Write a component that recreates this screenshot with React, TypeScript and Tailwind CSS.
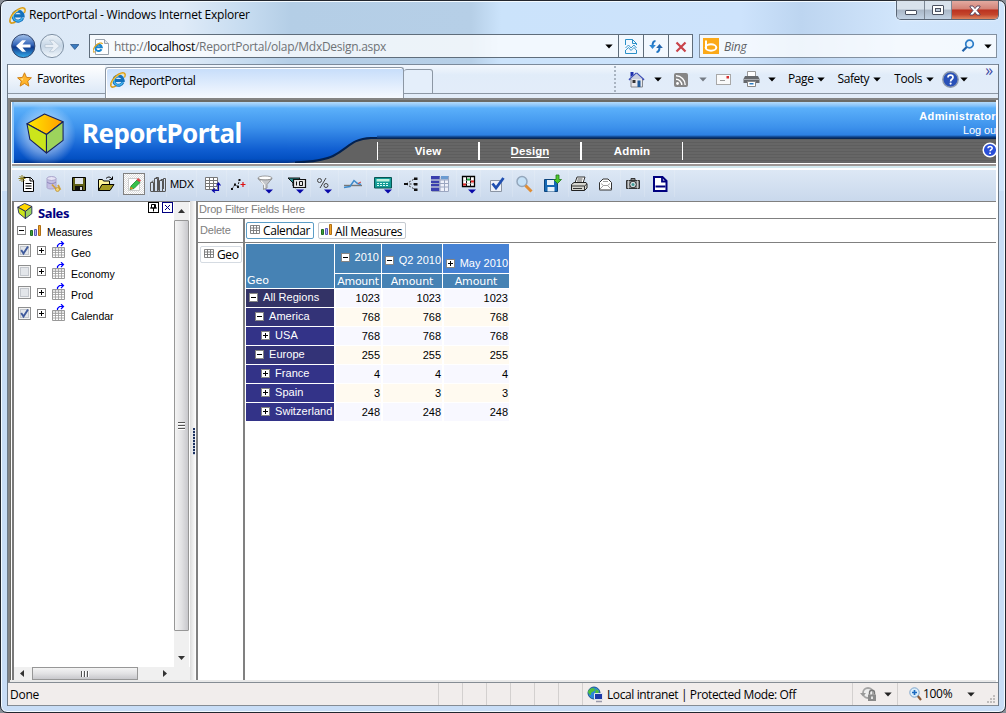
import type { ReactNode } from "react";

const ui = "font-['Open_Sans','Noto_Sans',sans-serif] text-[12px] whitespace-nowrap";
const arial = "font-['Liberation_Sans',Arial,sans-serif] whitespace-nowrap";

function Caret({ className = "text-black" }: { className?: string }) {
  return (
    <svg width="8" height="5" viewBox="0 0 8 5" className={"shrink-0 " + className}>
      <path d="M0.3 0.5h7.4L4 4.5z" fill="currentColor" />
    </svg>
  );
}

function IeLogo({ size = 16 }: { size?: number }) {
  return (
    <svg width={size} height={size} viewBox="0 0 16 16" className="shrink-0">
      <path d="M12.9 10.3A4.7 4.7 0 1 1 13.2 8.4H5.2" fill="none" stroke="#1371bd" strokeWidth="3" />
      <path d="M12.6 10.3A4.4 4.4 0 0 1 4.1 8.6 4.4 4.4 0 0 1 8.5 4.1" fill="none" stroke="#43b4ee" strokeWidth="1.3" />
      <path d="M14.3 5.5C16.5 1 13.6-.5 8.6 2.3 3.4 5.3.2 11 1 14c.7 2 3.5.9 5-.1" fill="none" stroke="#d99b16" strokeWidth="1.6" />
      <path d="M14 4.8C15.4 1.6 12.8.8 8.8 3 5 5.2 2.3 9 1.6 12" fill="none" stroke="#ffe06a" strokeWidth=".7" />
    </svg>
  );
}

function Cube({ size, plain }: { size: number; plain?: boolean }) {
  return (
    <svg width={size} height={size} viewBox="0 0 40 42" className="shrink-0">
      <defs>
        <linearGradient id="cubeTop" x1="0" x2="1">
          <stop offset="0" stopColor="#ffea00" />
          <stop offset="1" stopColor="#ff9c00" />
        </linearGradient>
      </defs>
      <g stroke="#17205c" strokeWidth={plain ? 2.2 : 1.1} strokeLinejoin="round">
        <path d="M1 11 19 1l19 8-17 13z" fill={plain ? "#ffd800" : "url(#cubeTop)"} />
        <path d="M1 11l20 11v19L4 27z" fill="#cbe51b" />
        <path d="M21 22 38 9v19L21 41z" fill="#9dd35c" />
      </g>
    </svg>
  );
}

function TitleBar() {
  return (
    <div className="flex h-[33px] shrink-0 items-start pl-[8px] pr-[6px]">
      <div className="flex grow items-center gap-[3px] pt-[5px]">
        <IeLogo size={17} />
        <span className={ui + " leading-[18px] tracking-[-0.25px] text-black"}>ReportPortal - Windows Internet Explorer</span>
      </div>
      <div className="flex h-[19px] overflow-hidden rounded-b-[5px] border border-t-0 border-[#5a6676] shadow-[0_0_2px_#fff]">
        <div className="flex w-[28px] items-center justify-center border-r border-[#7d8794] bg-linear-to-b from-[#d9e2ec] from-45% via-[#aab7c7] via-50% to-[#c2d2e4]">
          <div className="mt-[5px] h-[5px] w-[12px] rounded-[1px] border border-[#4b5160] bg-white" />
        </div>
        <div className="flex w-[27px] items-center justify-center border-r border-[#7d8794] bg-linear-to-b from-[#d9e2ec] from-45% via-[#aab7c7] via-50% to-[#c2d2e4]">
          <div className="flex h-[10px] w-[12px] items-center justify-center rounded-[1px] border border-[#4b5160] bg-white">
            <div className="h-[4px] w-[6px] border border-[#4b5160] bg-[#bcc9d8]" />
          </div>
        </div>
        <div className="flex w-[46px] items-center justify-center bg-[linear-gradient(#e3aaa0_0%,#d38377_44%,#bb3220_50%,#c4452c_75%,#dd8560_100%)]">
          <svg width="12" height="11" viewBox="0 0 12 11">
            <path d="M1 1h3l2 2.6L8 1h3v1L8 5.5 11 9v1H8L6 7.4 4 10H1V9l3-3.5L1 2z" fill="#fff" stroke="#53405a" strokeWidth=".9" />
          </svg>
        </div>
      </div>
    </div>
  );
}

function NavRow() {
  return (
    <div className="flex h-[30px] shrink-0 items-start pl-[10px] pr-[8px]">
      <svg width="68" height="27" viewBox="0 0 68 27" className="mt-[-1px] shrink-0">
        <defs>
          <linearGradient id="backFill" x1="0" y1="0" x2="0" y2="1">
            <stop offset="0" stopColor="#a7c5ec" />
            <stop offset=".45" stopColor="#3465b8" />
            <stop offset=".55" stopColor="#11398c" />
            <stop offset="1" stopColor="#35b0ee" />
          </linearGradient>
          <linearGradient id="fwdFill" x1="0" y1="0" x2="0" y2="1">
            <stop offset="0" stopColor="#eef4fa" />
            <stop offset=".5" stopColor="#c6d6e6" />
            <stop offset="1" stopColor="#f2f7fc" />
          </linearGradient>
        </defs>
        <circle cx="12.3" cy="13" r="11.6" fill="url(#backFill)" stroke="#33466c" strokeWidth="1" />
        <path d="M19.5 11.5h-8l3.5-4.2h-3.8L5 13l6.2 5.7H15l-3.5-4.2h8z" fill="#fff" />
        <circle cx="41" cy="13" r="11.6" fill="url(#fwdFill)" stroke="#7f91a5" strokeWidth="1" />
        <path d="M34 11.5h8l-3.5-4.2h3.8l6.2 5.7-6.2 5.7h-3.8l3.5-4.2h-8z" fill="#e9eff6" stroke="#b5c3d1" strokeWidth=".7" />
        <path d="M59.5 11.5h8.500l-4.200 5z" fill="#3b7cc0" stroke="#1f4c83" strokeWidth=".7" />
      </svg>
      <div className="ml-[10px] flex h-[24px] w-[604px] border border-[#5f6d7b] bg-white/75 pt-px">
        <div className="flex w-[528px] items-center pl-[3px] pr-[5px]">
          <svg width="17" height="18" viewBox="0 0 17 18" className="shrink-0">
            <path d="M2.5 1.5h9l4 4v11h-13z" fill="#fff" stroke="#9aa3ad" />
            <path d="M11.5 1.5v4h4" fill="#dfe6ee" stroke="#9aa3ad" />
            <path d="M8.500 11.3A3.2 3.2 0 1 1 8.800 9.3H3" fill="none" stroke="#1a86cf" strokeWidth="2" />
            <path d="M9.500 6C9 4 5 5 2 8.500 -.5 12 -1 15 2 13.700" fill="none" stroke="#e2a51d" strokeWidth="1.2" />
          </svg>
          <span className={ui + " ml-[4px] grow tracking-[-0.28px] text-[#6e7276]"}>
            http://<span className="text-black">localhost</span>/ReportPortal/olap/MdxDesign.aspx
          </span>
          <Caret />
        </div>
        <div className="-mt-px flex w-[25px] items-center justify-center border-l border-[#5f6d7b]">
          <svg width="12" height="15" viewBox="0 0 12 15" fill="none" stroke="#2a90c8">
            <path d="M.5 6V.5h7l4 4V6M7.500 .5v4h4M.5 11v3.500h11V11" />
            <path d="M.5 9 3.500 6 6 9l3-3 2.500 3M.5 11.500 3.500 8.500 6 11.500l3-3 2.500 3" strokeWidth=".9" />
          </svg>
        </div>
        <div className="-mt-px flex w-[25px] items-center justify-center border-l border-[#5f6d7b]">
          <svg width="14" height="13" viewBox="0 0 14 13" fill="none" stroke="#1e74c4" strokeWidth="2">
            <path d="M6.500 1C4 1 3.500 2.500 3.500 6" />
            <path d="M.2 5h6.600L3.500 9z" fill="#2a86d4" stroke="none" />
            <path d="M7.500 12c2.500 0 3-1.500 3-5" />
            <path d="M7.200 8h6.600L10.500 4z" fill="#2465ad" stroke="none" />
          </svg>
        </div>
        <div className="-mt-px flex w-[24px] items-center justify-center border-l border-[#5f6d7b]">
          <svg width="12" height="12" viewBox="0 0 12 12" className="mt-px">
            <path d="M1.500 1.500 10.500 10.500M10.500 1.500 1.500 10.500" stroke="#c9434a" strokeWidth="2.200" />
          </svg>
        </div>
      </div>
      <div className="ml-[6px] flex h-[24px] grow items-center border border-[#8290a0] bg-white/75 pl-[3px] pr-[4px]">
        <svg width="16" height="16" viewBox="0 0 16 16" className="shrink-0">
          <rect width="16" height="16" fill="#fba919" />
          <path d="M3 2.500v8" stroke="#fff" strokeWidth="2" />
          <ellipse cx="8" cy="9.500" rx="5.300" ry="3.200" fill="none" stroke="#fff" strokeWidth="2" />
        </svg>
        <span className={ui + " ml-[5px] mt-[2px] grow italic tracking-[-0.2px] text-[#5e6266]"}>Bing</span>
        <svg width="14" height="14" viewBox="0 0 14 14" className="mr-[9px]">
          <circle cx="8.500" cy="5" r="3.800" fill="#e8f4fd" stroke="#2b7cc8" strokeWidth="1.700" />
          <path d="M5.700 8 1.500 12.300" stroke="#2161a8" strokeWidth="2.200" />
        </svg>
        <Caret />
      </div>
    </div>
  );
}

function CommandBar() {
  return (
    <div className="flex h-[34px] shrink-0 border-t border-[#7b8a9b] bg-linear-to-b from-[#f2f7fd] from-0% via-[#e1ecf9] via-30% to-[#e3edf9]">
      <div className="flex h-[29px] w-[97px] items-center border-b border-[#8c97a4] bg-linear-to-b from-white to-[#dde9f7] pl-[9px]">
        <svg width="15" height="15" viewBox="0 0 15 15">
          <path d="m7.500.8 2 4.600 4.900.4-3.700 3.300 1.100 5-4.300-2.700-4.300 2.700 1.100-5L.6 5.800l4.900-.4z" fill="#ffb52c" stroke="#d18215" strokeWidth="1" />
          <path d="m7.500 3-.9 3.300-3 .4 2 2" fill="#ffe387" />
        </svg>
        <span className={ui + " ml-[5px] tracking-[-0.35px] text-black"}>Favorites</span>
      </div>
      <div className="mt-[2px] flex h-[32px] w-[299px] items-start rounded-t-[3px] border border-b-0 border-[#8c97a4] bg-linear-to-b from-[#c6ddfa] to-[#f7faff] pl-[4px] pt-[4px] shadow-[inset_1px_1px_0_#fff]">
        <IeLogo size={16} />
        <span className={ui + " ml-[3px] leading-[17px] tracking-[-0.4px] text-black"}>ReportPortal</span>
      </div>
      <div className="mt-[4px] h-[25px] w-[29px] rounded-t-[3px] border border-l-0 border-[#8c97a4] bg-[#e4eefa]" />
      <div className="flex h-[29px] grow items-center border-b border-[#8c97a4]">
        <div className="ml-[181px] h-[26px] w-0 border-l-2 border-dotted border-[#a9b4c1]" />
        <svg width="17" height="17" viewBox="0 0 17 17" className="ml-[12px]">
          <path d="M3 7.500h11.500V16H3z" fill="#e8e8ec" stroke="#84888e" />
          <path d="M8.500 2 1 8.800M8.500 2l7.500 6.800" stroke="#3d4db6" strokeWidth="1.600" />
          <path d="M8.500 2.500 2.500 8h12z" fill="#c9cede" />
          <path d="M2.500 1h3v3l-3 2z" fill="#1f2fae" />
          <path d="M9.500 9.500h3V16h-3z" fill="#1f5b9a" />
          <path d="M4.500 9h3v3h-3z" fill="#333" />
        </svg>
        <span className="ml-[9px]"><Caret /></span>
        <svg width="14" height="14" viewBox="0 0 14 14" className="ml-[12px] mt-px">
          <rect width="14" height="14" rx="2" fill="#868686" />
          <circle cx="3.500" cy="10.500" r="1.400" fill="#fff" />
          <path d="M2 6.200a5.800 5.800 0 0 1 5.800 5.800M2 2.800A9.200 9.200 0 0 1 11.200 12" fill="none" stroke="#fff" strokeWidth="1.400" />
        </svg>
        <span className="ml-[11px]"><Caret className="text-[#747b84]" /></span>
        <svg width="15" height="11" viewBox="0 0 15 11" className="ml-[9px]">
          <rect x=".5" y=".5" width="14" height="10" fill="#fafafa" stroke="#a8a8a8" />
          <path d="M10.500 2h2.500v2.500h-2.500z" fill="#d82d2d" />
          <path d="M4 6.500h5" stroke="#999" />
        </svg>
        <svg width="17" height="16" viewBox="0 0 17 16" className="ml-[12px]">
          <path d="M4.500.5h8v5h-8z" fill="#fff" stroke="#999" />
          <path d="M2 5h13l1.500 3v4h-16V8z" fill="#66696d" />
          <path d="M1 8.500h15" stroke="#a8abb0" />
          <path d="M4.500 10.500h8v5h-8z" fill="#fff" stroke="#888" />
          <path d="M6.500 12h4v1.500h-4z" fill="#2c7cc4" />
        </svg>
        <span className="ml-[8px]"><Caret /></span>
        <span className={ui + " ml-[12px] tracking-[-0.4px]"}>Page</span>
        <span className="ml-[3px]"><Caret /></span>
        <span className={ui + " ml-[13px] tracking-[-0.45px]"}>Safety</span>
        <span className="ml-[4px]"><Caret /></span>
        <span className={ui + " ml-[13px] tracking-[-0.35px]"}>Tools</span>
        <span className="ml-[4px]"><Caret /></span>
        <svg width="17" height="17" viewBox="0 0 17 17" className="ml-[8px]">
          <circle cx="8.500" cy="8.500" r="7.700" fill="#2850b8" stroke="#8d99ad" strokeWidth="1.400" />
          <path d="M6 6.500C6 3.400 11 3.500 11 6.400c0 2-2.400 1.800-2.400 4" fill="none" stroke="#fff" strokeWidth="1.700" />
          <circle cx="8.600" cy="12.600" r="1.100" fill="#fff" />
        </svg>
        <span className="ml-[1px]"><Caret /></span>
        <span className={ui + " ml-[17px] mt-[-17px] text-[16px] leading-[15px] text-[#3e4aa5]"}>»</span>
      </div>
    </div>
  );
}

function HeaderTab({ label, on }: { label: string; on?: boolean }) {
  return (
    <div className={arial + " flex h-[18px] w-[102px] items-center justify-center border-r-2 border-white text-[11.500px] font-bold tracking-[0.1px] text-white last-of-type:w-[101px] last-of-type:border-r"}>
      <span className={on ? "border-b border-white leading-[12px]" : "leading-[13px]"}>{label}</span>
    </div>
  );
}

function Banner() {
  return (
    <div className="flex h-[61px] shrink-0 overflow-hidden">
      <div className="flex w-[275px] shrink-0 items-center border-l-2 border-[#8cc4f6] bg-[linear-gradient(#b5dcfb_0px,#83c2fa_4px,#5bb0fa_6px,#3d92ec_25px,#0f5dd0_48px,#0350c2_57px,#03358a_61px)]">
        <div className="flex h-full w-[62px] items-center justify-center bg-[radial-gradient(circle_at_50%_54%,#ffffffa0_0%,#ffffff60_40%,transparent_68%)] pt-px">
          <Cube size={41} />
        </div>
        <span className="ml-[6px] mt-px font-['Noto_Sans',sans-serif] text-[26px] leading-[34px] font-bold tracking-[-0.6px] text-white">ReportPortal</span>
      </div>
      <svg width="90" height="61" viewBox="0 0 90 61" className="shrink-0">
        <defs>
          <linearGradient id="bannerFill" x1="0" y1="0" x2="0" y2="61" gradientUnits="userSpaceOnUse">
            <stop offset="0" stopColor="#b5dcfb" />
            <stop offset=".066" stopColor="#83c2fa" />
            <stop offset=".1" stopColor="#5bb0fa" />
            <stop offset=".41" stopColor="#3d92ec" />
            <stop offset=".79" stopColor="#0f5dd0" />
            <stop offset=".934" stopColor="#0350c2" />
            <stop offset="1" stopColor="#03358a" />
          </linearGradient>
        </defs>
        <rect width="90" height="61" fill="#626262" />
        <path d="M0 0h90v36h-6C64 37 62 46 46 54 36 59 20 60 0 61z" fill="url(#bannerFill)" />
        <path d="M90 36h-6C64 37 62 46 46 54 36 59 20 60 8 60.500" fill="none" stroke="#03214f" strokeWidth="2" />
      </svg>
      <div className="flex min-w-0 grow flex-col">
        <div className="flex h-[37px] shrink-0 flex-col items-end bg-[linear-gradient(#b5dcfb_0px,#83c2fa_4px,#5bb0fa_6px,#3d92ec_25px,#2d80e2_33px,#0c3f86_35px,#061f45_37px)] pt-[7px] text-white">
          <span className={arial + " text-[11px] leading-[14px] font-bold tracking-[0.35px]"}>Administrator</span>
          <span className={arial + " text-[11px] leading-[14px] tracking-[-0.1px]"}>Log ou</span>
        </div>
        <div className="flex grow items-center bg-[repeating-linear-gradient(#5e5e5e_0px,#5e5e5e_1px,#666_1px,#666_3px)]">
          <div className="h-[18px] w-px bg-white" />
          <HeaderTab label="View" />
          <HeaderTab label="Design" on />
          <HeaderTab label="Admin" />
          <span className="flex grow justify-end overflow-hidden">
            <svg width="14" height="16" viewBox="0 0 14 16" className="my-[2px] mb-[5px]">
              <circle cx="8" cy="8" r="6.800" fill="#2a4fd8" stroke="#fff" strokeWidth="1.500" />
              <path d="M6 6.200c0-2.500 4.200-2.300 4.200 0 0 1.500-2.100 1.500-2.100 3" fill="none" stroke="#fff" strokeWidth="1.500" />
              <path d="M7.200 10.500h1.700v1.600H7.200z" fill="#fff" />
            </svg>
          </span>
        </div>
      </div>
    </div>
  );
}

function Ico({ children }: { children: ReactNode }) {
  return (
    <svg width="20" height="20" viewBox="0 0 20 20" fill="none" className="shrink-0">
      {children}
    </svg>
  );
}

const drop = <path d="M9 15.500h8l-4 4z" fill="#0808a8" />;

const tools: { w: string; el: ReactNode; on?: boolean }[] = [
  { w: "w-[28px]", el: <Ico><path d="M6.500 3.500h7l3 3v11h-10z" fill="#fff" stroke="#000" /><path d="M13 3.500v3.500h3.500M8.500 9.500h6M8.500 12h6M8.500 14.500h6" stroke="#000" /><path d="M5 1v7M1.500 4.500h7M2.500 2l5 5M7.500 2l-5 5" stroke="#8a7c19" /></Ico> },
  { w: "w-[24px]", el: <Ico><path d="M4 4.500v9c0 2 9 2 9 0v-9" fill="#c3bde3" stroke="#a9a4cb" /><ellipse cx="8.500" cy="4.500" rx="4.500" ry="2" fill="#e6e3f5" stroke="#a9a4cb" /><path d="M4 8c2 2 7 2 9 0" stroke="#8c86bb" /><path d="M9 10.500 14 16l3-1-2-4" stroke="#d0a13c" strokeWidth="1.800" /><circle cx="14.500" cy="15.500" r="2" fill="#f2d476" stroke="#b78b2c" strokeWidth=".7" /></Ico> },
  { w: "w-[28px]", el: <Ico><path d="M3.500 3.500h13v13h-13z" fill="#5f5f16" stroke="#000" /><path d="M6 4h8v6H6z" fill="#dfe3ea" /><path d="M6 12h8v4.500H6z" fill="#111" /><path d="M11 13h2v3h-2z" fill="#ddd" /></Ico> },
  { w: "w-[26px]", el: <Ico><path d="M2.500 16.500v-11h4l1 1.500h6v3" fill="#fff59a" stroke="#000" /><path d="M2.500 16.500 6 10.500h12l-4 6z" fill="#a59b22" stroke="#000" /><path d="M10 4.500c2-2 4-2 6 .5M16.500 2.500V5.500h-3" stroke="#000" /></Ico> },
  { w: "w-[30px]", on: true, el: <Ico><path d="M4.500 4.500h11v12h-11z" fill="#fff" stroke="#ccc" /><path d="m6 15.500 1-3.500 6-6 3 2.500-6 6z" fill="#37c14a" stroke="#218433" strokeWidth=".8" /><path d="m12.500 6 1.500-2 3 2.500-1.500 1.500z" fill="#e04747" /><path d="m6 15.500.8-2.800L9.500 14.500z" fill="#e88b1e" /></Ico> },
  { w: "w-[18px]", el: <Ico><path d="M2.500 17V8.500h3V17M6.500 17V4.500h3V17M11.500 17V6.500h3V17M15.500 15V4.500h2V17M2.500 17.500h15M3.500 8.500l1-1.500h1M7.500 4.500l.5-1h2.500v13M12.500 6.500l.5-1h2.500" stroke="#555" /></Ico> },
  { w: "w-[30px]", el: <span className={arial + " pl-px pt-px text-[11px] tracking-[-0.1px] text-black"}>MDX</span> },
  { w: "w-[30px]", el: <Ico><path d="M3.500 3.500h12v12h-12z" fill="#fff" stroke="#777" /><path d="M3.500 6.500h12M3.500 9.500h12M3.500 12.500h12M7.500 3.500v12M11.500 3.500v12" stroke="#777" /><path d="M11 16.500h5.500V9.500M14.500 11.500l2-2.500 2 2.500M13 14.500l-2.500 2 2.500 2" stroke="#0a0aa8" strokeWidth="1.200" /></Ico> },
  { w: "w-[22px]", el: <Ico><path d="m4 15 3-4.500 2.500 2.500 2-7" stroke="#222" strokeDasharray="2 1" /><path d="M3 14h2v2H3zM6 9.500h2v2H6zM9 12h2v2H9zM10.500 5h2v2h-2z" fill="#111" /><path d="M12.500 10.500h5M15 8v5" stroke="#d11" strokeWidth="1.200" /></Ico> },
  { w: "w-[34px]", el: <Ico><ellipse cx="9" cy="4" rx="7" ry="2" fill="#fff" stroke="#888" strokeWidth=".8" /><path d="m2 4.500 5.500 6v5l3.500-1.500v-3.500l5-6c-2 2-11 2-14 0z" fill="#c4c6ca" stroke="#888" strokeWidth=".8" /><path d="M5 6.800 8.500 11v3" stroke="#f5f5f5" strokeWidth="1.200" />{drop}</Ico> },
  { w: "w-[28px]", el: <Ico><path d="M1 4h12L9 9v5l-3-2V9z" fill="#269090" stroke="#111" /><path d="M6.500 5.500h12v8h-12z" fill="#e8e8e8" stroke="#111" strokeWidth="1.200" /><path d="M9.500 7.500v4M12.500 7.500h3v4h-3z" stroke="#111" />{drop}</Ico> },
  { w: "w-[28px]", el: <Ico><circle cx="4.500" cy="6.500" r="2" stroke="#444" /><circle cx="11" cy="11.500" r="2" stroke="#444" /><path d="M11 4 5 14" stroke="#444" />{drop}</Ico> },
  { w: "w-[28px]", el: <Ico><path d="M1 11.500h18" stroke="#777" strokeWidth="1.400" /><path d="m1 13.500 6-1 4-6 3.500 3 3.500 1" stroke="#3d8acb" strokeWidth="1.500" /><path d="m15 9.500 3-1.500" stroke="#cf3a3a" /></Ico> },
  { w: "w-[32px]", el: <Ico><path d="M1.500 3.500h17v10.500h-17z" fill="#129b96" stroke="#085553" /><path d="M3.500 5h13v2.500h-13z" fill="#bff0dc" /><path d="M4 9.500h12M4 11.500h12" stroke="#d8fff6" strokeDasharray="2 1" /><path d="M11 15.500h8l-4 4z" fill="#0808a8" /></Ico> },
  { w: "w-[24px]", el: <Ico><path d="M5 10 14 4.500M5 10h9M5 10l9 5.500" stroke="#333" strokeDasharray="2 1.500" /><path d="M3 9h4v2H3zM13 3.500h3.500V6H13zM13 9h3.500v2.500H13zM13 14.500h3.500V17H13z" fill="#111" /></Ico> },
  { w: "w-[34px]", el: <Ico><path d="M1 2h18v16H1z" fill="#eef0fa" /><path d="M1 2h9v3.500H1zM1 6.500h8.500V9H1zM1 10h8.500v2.500H1zM1 13.500h8.500V17H1z" fill="#3a3fae" /><path d="M11 2h8v3.500h-8z" fill="#6a9bd1" /><path d="M1.500 6h17M1.500 9.500h17M1.500 13h17M10 2.500v15M14.500 6v11.500M18.500 2.500v15M1.500 17.500h17" stroke="#9ba6c0" /></Ico> },
  { w: "w-[24px]", el: <Ico><path d="M3.500 2.500h12v10h-12z" fill="#fff" stroke="#000" strokeWidth="1.300" /><path d="M7.500 2.500v10M11.500 2.500v10" stroke="#111" /><path d="M4 6.500h11M4 9.500h11" stroke="#bbb" strokeWidth=".6" /><path d="M4 9.500h3v2H4zM12 6.500h3v2h-3z" fill="#d22" /><path d="M8 4.500h3v2H8z" fill="#2a4" /><path d="M9 15.500h8l-4 4z" fill="#0808a8" /></Ico> },
  { w: "w-[32px]", el: <Ico><path d="M3.500 6.500h11v11h-11z" fill="#eef2f8" stroke="#8a94a3" /><path d="M5.500 9.500 9 14 16.500 4" stroke="#1f4fb0" strokeWidth="2.800" /></Ico> },
  { w: "w-[22px]", el: <Ico><circle cx="8" cy="7.500" r="5" fill="#c5e1f7" stroke="#93a6bb" strokeWidth="1.500" /><path d="m11.500 11.500 6 6" stroke="#df8d35" strokeWidth="3" /></Ico> },
  { w: "w-[34px]", el: <Ico><path d="M2.500 5.500h13v12h-13z" fill="#1669b4" stroke="#0d447c" /><path d="M5 6h7v5H5zM5.500 13h7v4.500h-7z" fill="#e8f2fa" /><path d="M14 1h3v4.500h2.500l-4 4-4-4H14z" fill="#4fc92c" stroke="#1f7a16" strokeWidth=".8" /></Ico> },
  { w: "w-[20px]", el: <Ico><path d="m6 9 2-6h8l-2 6" fill="#fff" stroke="#333" /><path d="M8.500 5h5M8 7h5" stroke="#555" /><path d="M2.500 10.500 5 8.500h12l1 1.500v4l-2.500 2.500h-13z" fill="#d6d6d0" stroke="#222" /><path d="M2.500 12h13v4.500M15.500 12 18 10M4 14.500h9" stroke="#333" /></Ico> },
  { w: "w-[32px]", el: <Ico><path d="M4.500 8.500 8 5h5l3.500 3.500v7.500h-12z" fill="#fff" stroke="#333" /><path d="m4.500 15.500 4-4h4l4 4M6 9.500l2.500 2M15 9.500l-2.500 2M8 7.500h5" stroke="#888" strokeWidth=".8" /></Ico> },
  { w: "w-[24px]", el: <Ico><path d="M3.500 6.500h13v8h-13z" fill="#8a8d8f" stroke="#333" /><path d="M8 4.500h4v2H8z" fill="#888" stroke="#333" /><circle cx="10" cy="10.500" r="3.300" fill="#d6dfe0" stroke="#333" /><circle cx="10" cy="10.500" r="1.500" fill="#439d98" /><path d="M5.500 6.500v8M14.500 6.500v8" stroke="#ccc" /></Ico> },
  { w: "w-[30px]", el: <Ico><path d="M4 3h8.500l4 4v10H4z" fill="#fff" stroke="#00007e" strokeWidth="2" /><path d="M12 3v4.500h4.500M5.500 12.500h10" stroke="#00007e" strokeWidth="1.800" /></Ico> },
];

function Toolbar() {
  return (
    <div className="flex h-[31px] shrink-0 items-start bg-linear-to-b from-[#dde8f5] to-[#c9d8ec] pl-px">
      {tools.map((t, i) => (
        <div key={i} className={"flex h-[27px] shrink-0 items-center justify-center border-r border-white/15 " + t.w}>
          {t.on ? (
            <div className="flex h-[22px] w-[22px] items-center justify-center border border-[#808080] bg-[repeating-conic-gradient(#ddd_0_25%,#fff_0_50%)] bg-size-[2px_2px]">{t.el}</div>
          ) : (
            t.el
          )}
        </div>
      ))}
    </div>
  );
}

function Toggle({ open }: { open?: boolean }) {
  return (
    <svg width="9" height="9" viewBox="0 0 9 9" className="shrink-0">
      <rect x=".5" y=".5" width="8" height="8" fill="#fff" stroke="#848484" />
      <path d={open ? "M2 4.500h5" : "M2 4.500h5M4.500 2v5"} stroke="#000" />
    </svg>
  );
}

function GridIcon() {
  return (
    <svg width="14" height="17" viewBox="0 -6 14 17" className="shrink-0">
      <path d="M.5.500h12v10H.5z" fill="#fff" stroke="#999" />
      <path d="M1 1.500h11v1H1z" fill="#c4c4c4" />
      <path d="M.5 3.500h12M.5 5.500h12M.5 8h12M3.500.500v10M6.500.500v10M9.500.500v10" stroke="#999" strokeWidth=".8" />
      <path d="M5.500 0V-1.500L7.500-3.500h3.500M9-5.800l2.500 2.300L9-1" fill="none" stroke="#00f" strokeWidth="1.200" />
    </svg>
  );
}

function Bars() {
  return (
    <svg width="13" height="11" viewBox="0 0 13 11" className="shrink-0">
      <path d="M.5 5.500h2v5h-2z" fill="#3ea23e" stroke="#236b23" />
      <path d="M4.500 4.500h2v6h-2z" fill="#b0b0f0" stroke="#5a5ab8" />
      <path d="M8.500.500h2v10h-2z" fill="#f3a227" stroke="#b06f14" />
    </svg>
  );
}

function Check({ on }: { on?: boolean }) {
  return (
    <svg width="13" height="13" viewBox="0 0 13 13" className="shrink-0">
      <rect x=".5" y=".5" width="12" height="12" fill="#f4f4f4" stroke="#8e8f8f" />
      <rect x="2.500" y="2.500" width="8" height="8" fill="#e3e6ea" stroke="#c3c7cd" />
      {on && <path d="m3.200 6 2.300 3.500 4.500-7" fill="none" stroke="#3f5a9c" strokeWidth="1.900" />}
    </svg>
  );
}

const dims = [
  { name: "Geo", on: true },
  { name: "Economy", on: false },
  { name: "Prod", on: false },
  { name: "Calendar", on: true },
];

function Sidebar() {
  return (
    <div className="flex w-[178px] shrink-0 flex-col border-l-2 border-t border-[#7a7a7a] bg-white">
      <div className="flex min-h-0 grow">
        <div className="flex w-[160px] shrink-0 flex-col">
          <div className="flex h-[21px] items-start pl-[3px]">
            <span className="mt-[1px]"><Cube size={16} plain /></span>
            <span className="ml-[5px] mt-[3px] font-['Noto_Sans',sans-serif] text-[13px] leading-[16px] font-bold tracking-[-0.4px] text-[#000080]">Sales</span>
            <svg width="11" height="11" viewBox="0 0 11 11" className="ml-auto">
              <rect x=".5" y=".5" width="10" height="10" fill="#fff" stroke="#000" />
              <path d="M3.500 2.500h4v3.500h-4zM2 6h7M5.500 6v3.500M6.500 3v3" fill="none" stroke="#000" />
            </svg>
            <svg width="11" height="11" viewBox="0 0 11 11" className="ml-[3px] mr-[1px]">
              <rect x=".5" y=".5" width="10" height="10" fill="#fff" stroke="#000080" />
              <path d="m3 3 5 5M8 3 3 8" stroke="#000080" />
            </svg>
          </div>
          <div className="flex h-[19px] items-center pl-[3px]">
            <span className="mt-[-4px]"><Toggle open /></span>
            <span className="ml-[4px] mt-[-4px]"><Bars /></span>
            <span className={arial + " ml-[4px] text-[10.500px] tracking-[-0.1px] text-black"}>Measures</span>
          </div>
          {dims.map((d) => (
            <div key={d.name} className="flex h-[21px] items-start pl-[4px]">
              <span className="mt-[2px]"><Check on={d.on} /></span>
              <span className="ml-[6px] mt-[4px]"><Toggle /></span>
              <span className="ml-[6px] mt-[-1px]"><GridIcon /></span>
              <span className={arial + " ml-[5px] mt-[4px] text-[10.500px] leading-[14px] text-black"}>{d.name}</span>
            </div>
          ))}
        </div>
        <div className="flex w-[15px] shrink-0 flex-col items-center bg-[#f0f0f0]">
          <svg width="7" height="4" viewBox="0 0 7 4" className="mt-[7px]"><path d="M0 4h7L3.500 0z" fill="#333" /></svg>
          <div className="mt-[7px] flex h-[411px] w-full shrink-0 flex-col items-center justify-center gap-px rounded-[1px] border border-[#979797] bg-linear-to-r from-[#f4f4f4] via-[#e2e2e4] to-[#c8c8cc]">
            <div className="h-[2px] w-[7px] border-b border-white bg-[#555]" />
            <div className="h-[2px] w-[7px] border-b border-white bg-[#555]" />
            <div className="h-[2px] w-[7px] border-b border-white bg-[#555]" />
          </div>
          <svg width="7" height="4" viewBox="0 0 7 4" className="mt-[25px]"><path d="M0 0h7L3.500 4z" fill="#333" /></svg>
        </div>
      </div>
      <div className="flex h-[13px] shrink-0 items-center bg-[#f0f0f0]">
        <svg width="4" height="7" viewBox="0 0 4 7" className="ml-[6px]"><path d="M4 0v7L0 3.500z" fill="#333" /></svg>
        <div className="ml-[8px] flex h-[13px] w-[106px] items-center justify-center gap-px border border-[#979797] bg-linear-to-b from-[#f4f4f4] via-[#e2e2e4] to-[#c8c8cc]">
          <div className="h-[6px] w-[2px] border-r border-white bg-[#555]" />
          <div className="h-[6px] w-[2px] border-r border-white bg-[#555]" />
          <div className="h-[6px] w-[2px] border-r border-white bg-[#555]" />
        </div>
        <svg width="4" height="7" viewBox="0 0 4 7" className="ml-[25px]"><path d="M0 0v7l4-3.500z" fill="#333" /></svg>
      </div>
    </div>
  );
}

const rows = [
  { name: "All Regions", pad: "pl-[3px]", open: true, v: 1023, bg: "bg-[#333366]" },
  { name: "America", pad: "pl-[9px]", open: true, v: 768, bg: "bg-[#333377]" },
  { name: "USA", pad: "pl-[15px]", open: false, v: 768, bg: "bg-[#333388]" },
  { name: "Europe", pad: "pl-[9px]", open: true, v: 255, bg: "bg-[#333377]" },
  { name: "France", pad: "pl-[15px]", open: false, v: 4, bg: "bg-[#333388]" },
  { name: "Spain", pad: "pl-[15px]", open: false, v: 3, bg: "bg-[#333388]" },
  { name: "Switzerland", pad: "pl-[15px]", open: false, v: 248, bg: "bg-[#333388]" },
];

const verdana = "font-['DejaVu_Sans',Verdana,sans-serif] text-[11px] whitespace-nowrap text-white";

function ColHead({ label, open, cls }: { label: string; open?: boolean; cls: string }) {
  return (
    <div className={"flex items-start justify-end " + cls}>
      <span className="mt-[2px] mr-[5px]"><Toggle open={open} /></span>
      <span className={arial + " text-[11px] leading-[12px] text-white"}>{label}</span>
    </div>
  );
}

function Pivot() {
  return (
    <div className="grid w-[263px] grid-cols-[88px_46px_60px_66px] grid-rows-[29px_14px] gap-px">
      <div className={verdana + " row-span-2 flex items-end bg-[#4682b4] pl-px leading-[14px]"}>Geo</div>
      <ColHead label="2010" open cls="bg-[#4682b4] pt-[7px] pr-[2px]" />
      <ColHead label="Q2 2010" open cls="bg-[#4682c0] pt-[10px] pr-px" />
      <ColHead label="May 2010" cls="bg-[#4682d4] pt-[13px] pr-px" />
      <div className={verdana + " bg-[#4682b4] text-center leading-[15px] tracking-[-0.3px]"}>Amount</div>
      <div className={verdana + " bg-[#4682b4] text-center leading-[15px] tracking-[-0.1px]"}>Amount</div>
      <div className={verdana + " bg-[#4682b4] text-center leading-[15px] tracking-[-0.1px]"}>Amount</div>
      {rows.map((r, i) => (
        <div key={r.name} className="col-span-4 grid h-[18px] grid-cols-subgrid">
          <div className={"flex items-start overflow-hidden pt-[2px] " + r.pad + " " + r.bg}>
            <span className="mt-[2px]"><Toggle open={r.open} /></span>
            <span className={arial + " ml-[5px] text-[11px] leading-[13px] tracking-[0.05px] text-white"}>{r.name}</span>
          </div>
          {[0, 1, 2].map((c) => (
            <div key={c} className={arial + " ml-px pr-px pt-[2px] text-right text-[11px] leading-[14px] text-black " + (i % 2 ? "bg-[#fffaf0]" : "bg-[#f8f8ff]")}>{r.v}</div>
          ))}
        </div>
      ))}
    </div>
  );
}

function Chip({ label, bars, cls }: { label: string; bars?: boolean; cls: string }) {
  return (
    <div className={"flex h-[17px] items-center rounded-[2px] border bg-white " + cls}>
      <span className="mt-[-3px] flex">{bars ? <Bars /> : <svg width="10" height="9" viewBox="0 0 10 9"><path d="M.5.500h9v8h-9zM.5 3h9M.5 5.500h9M3.500.500v8M6.500.500v8" fill="none" stroke="#777" strokeWidth=".9" /></svg>}</span>
      <span className={ui + " leading-[15px] text-black " + (bars ? "ml-px pt-px tracking-[-0.35px]" : "ml-[3px] tracking-[-0.4px]")}>{label}</span>
    </div>
  );
}

function Workspace() {
  return (
    <div className="flex min-w-0 grow flex-col border-l-2 border-t border-[#808080] bg-white">
      <div className={arial + " h-[17px] shrink-0 border-b border-[#808080] pl-px text-[11px] leading-[15px] tracking-[-0.2px] text-[#808080]"}>Drop Filter Fields Here</div>
      <div className="flex h-[24px] shrink-0 border-b border-[#808080]">
        <div className={arial + " w-[47px] border-r-2 border-[#808080] pl-[2px] text-[11px] leading-[23px] tracking-[-0.2px] text-[#808080]"}>Delete</div>
        <div className="flex items-start gap-[4px] pl-px pt-[3px]">
          <Chip label="Calendar" cls="w-[68px] border-[#5c9dc6] pl-[3px]" />
          <Chip label="All Measures" bars cls="w-[88px] border-[#c5cad0] pl-[2px]" />
        </div>
      </div>
      <div className="flex min-h-0 grow">
        <div className="w-[47px] shrink-0 border-r-2 border-[#808080] pl-[2px] pt-[3px]">
          <Chip label="Geo" cls="w-[42px] border-[#d5dbe2] pl-[3px]" />
        </div>
        <div className="pl-px pt-px">
          <Pivot />
        </div>
      </div>
    </div>
  );
}

function StatusBar() {
  return (
    <div className="flex h-[24px] shrink-0 items-center border-y border-[#858c94] bg-[#f1edec]">
      <span className={ui + " w-[430px] pl-[2px] pt-px tracking-[-0.25px] text-black"}>Done</span>
      {[0, 1, 2, 3, 4, 5].map((n) => (
        <div key={n} className="h-full w-[24px] border-l border-[#d3d0cf]" />
      ))}
      <div className="flex h-full w-[270px] items-center border-l border-[#d3d0cf] pl-[4px]">
        <svg width="17" height="17" viewBox="0 0 17 17">
          <circle cx="7" cy="7" r="6" fill="#2c86d9" stroke="#1b5691" />
          <path d="M3 3c3-2 5-1 5 1s-4 1-4 4-3-1-3-2 1-2 2-3zM9 3l3 2-1 3-3-1z" fill="#4fbf3d" />
          <path d="M7.500 7.500h8v6h-8z" fill="#1c3aa8" stroke="#dfe5ee" />
          <path d="M9 15.500h6" stroke="#99a" strokeWidth="1.500" />
        </svg>
        <span className={ui + " ml-[3px] pt-px tracking-[-0.39px] text-black"}>Local intranet | Protected Mode: Off</span>
      </div>
      <div className="flex h-full w-[45px] items-center border-l border-[#d3d0cf] pl-[7px]">
        <svg width="18" height="17" viewBox="0 0 18 17">
          <circle cx="8" cy="7" r="5" fill="#eee" stroke="#a5a5a5" strokeWidth="1.800" />
          <path d="M0 7h6L3 10.500z" fill="#999" />
          <path d="M8 8.500h8V15H8z" fill="#8a8a8a" />
          <path d="M9.500 8.500V6.500c0-3 5-3 5 0v2" fill="none" stroke="#777" strokeWidth="1.400" />
          <path d="M12 10.500v2.500" stroke="#fff" strokeWidth="1.500" />
        </svg>
        <span className="ml-[6px]"><Caret className="text-[#222]" /></span>
      </div>
      <div className="flex h-full grow items-center border-l border-[#d3d0cf] pl-[11px]">
        <svg width="13" height="14" viewBox="0 0 13 14">
          <path d="m8 8 4 5" stroke="#8a5a35" strokeWidth="2.200" />
          <circle cx="5.500" cy="5.500" r="4.700" fill="#dceefb" stroke="#7ba4cb" />
          <path d="M5.500 3v5M3 5.500h5" stroke="#1c6ac0" strokeWidth="1.700" />
        </svg>
        <span className={ui + " ml-[1px] w-[44px] tracking-[-0.3px] text-black"}>100%</span>
        <Caret className="text-[#222]" />
        <svg width="10" height="10" viewBox="0 0 10 10" className="ml-auto mr-[2px] mt-[9px]">
          <path d="M7 1h2v2H7zM4 4h2v2H4zM7 4h2v2H7zM1 7h2v2H1zM4 7h2v2H4zM7 7h2v2H7z" fill="#c0bdbc" />
        </svg>
      </div>
    </div>
  );
}

export default function App() {
  return (
    <div className="h-[713px] w-[1006px] overflow-hidden bg-[#8a8f97]">
      <div className="flex h-full flex-col rounded-[7px] border border-[#22262e] bg-[linear-gradient(90deg,#dce9f7_0px,#dfebf8_180px,#c4daef_250px,#b4cee6_290px,#b6cfe7_470px,#cbe3fb_500px,#cde3fc_740px,#bdd5f0_800px,#d2e6fc_900px,#cfe4fb_1006px)] bg-size-[100%_190px] bg-no-repeat bg-[#c8ddf6] shadow-[inset_0_0_0_1px_#f3faff]">
        <TitleBar />
        <NavRow />
        <div className="mx-[6px] mb-[6px] flex min-h-0 grow flex-col border-x border-[#6d7a88]">
          <CommandBar />
          <div className="flex min-h-0 grow flex-col border-l-2 border-t-2 border-[#848484] bg-white pr-[2px]">
            <div className="flex min-h-0 grow flex-col border-l border-t-2 border-[#6b6b66] pl-px">
              <Banner />
              <div className="h-[7px] shrink-0 border-t border-[#fff] bg-[linear-gradient(#9c9694_0px,#9c9694_2px,#d3eaf0_2px,#d3eaf0_4px,#fff_4px)]" />
              <Toolbar />
              <div className="flex min-h-0 grow">
                <Sidebar />
                <div className="flex w-[6px] shrink-0 flex-col items-end bg-linear-to-r from-[#dcdcdc] to-white pt-[227px] pr-px">
                  <div className="h-[27px] w-[2px] bg-[repeating-linear-gradient(#1d3260_0px,#1d3260_2px,#c9d2e4_2px,#c9d2e4_3px)]" />
                </div>
                <Workspace />
              </div>
            </div>
            <div className="h-[2px] shrink-0 bg-[#e9e9e9]" />
          </div>
          <StatusBar />
        </div>
      </div>
    </div>
  );
}
